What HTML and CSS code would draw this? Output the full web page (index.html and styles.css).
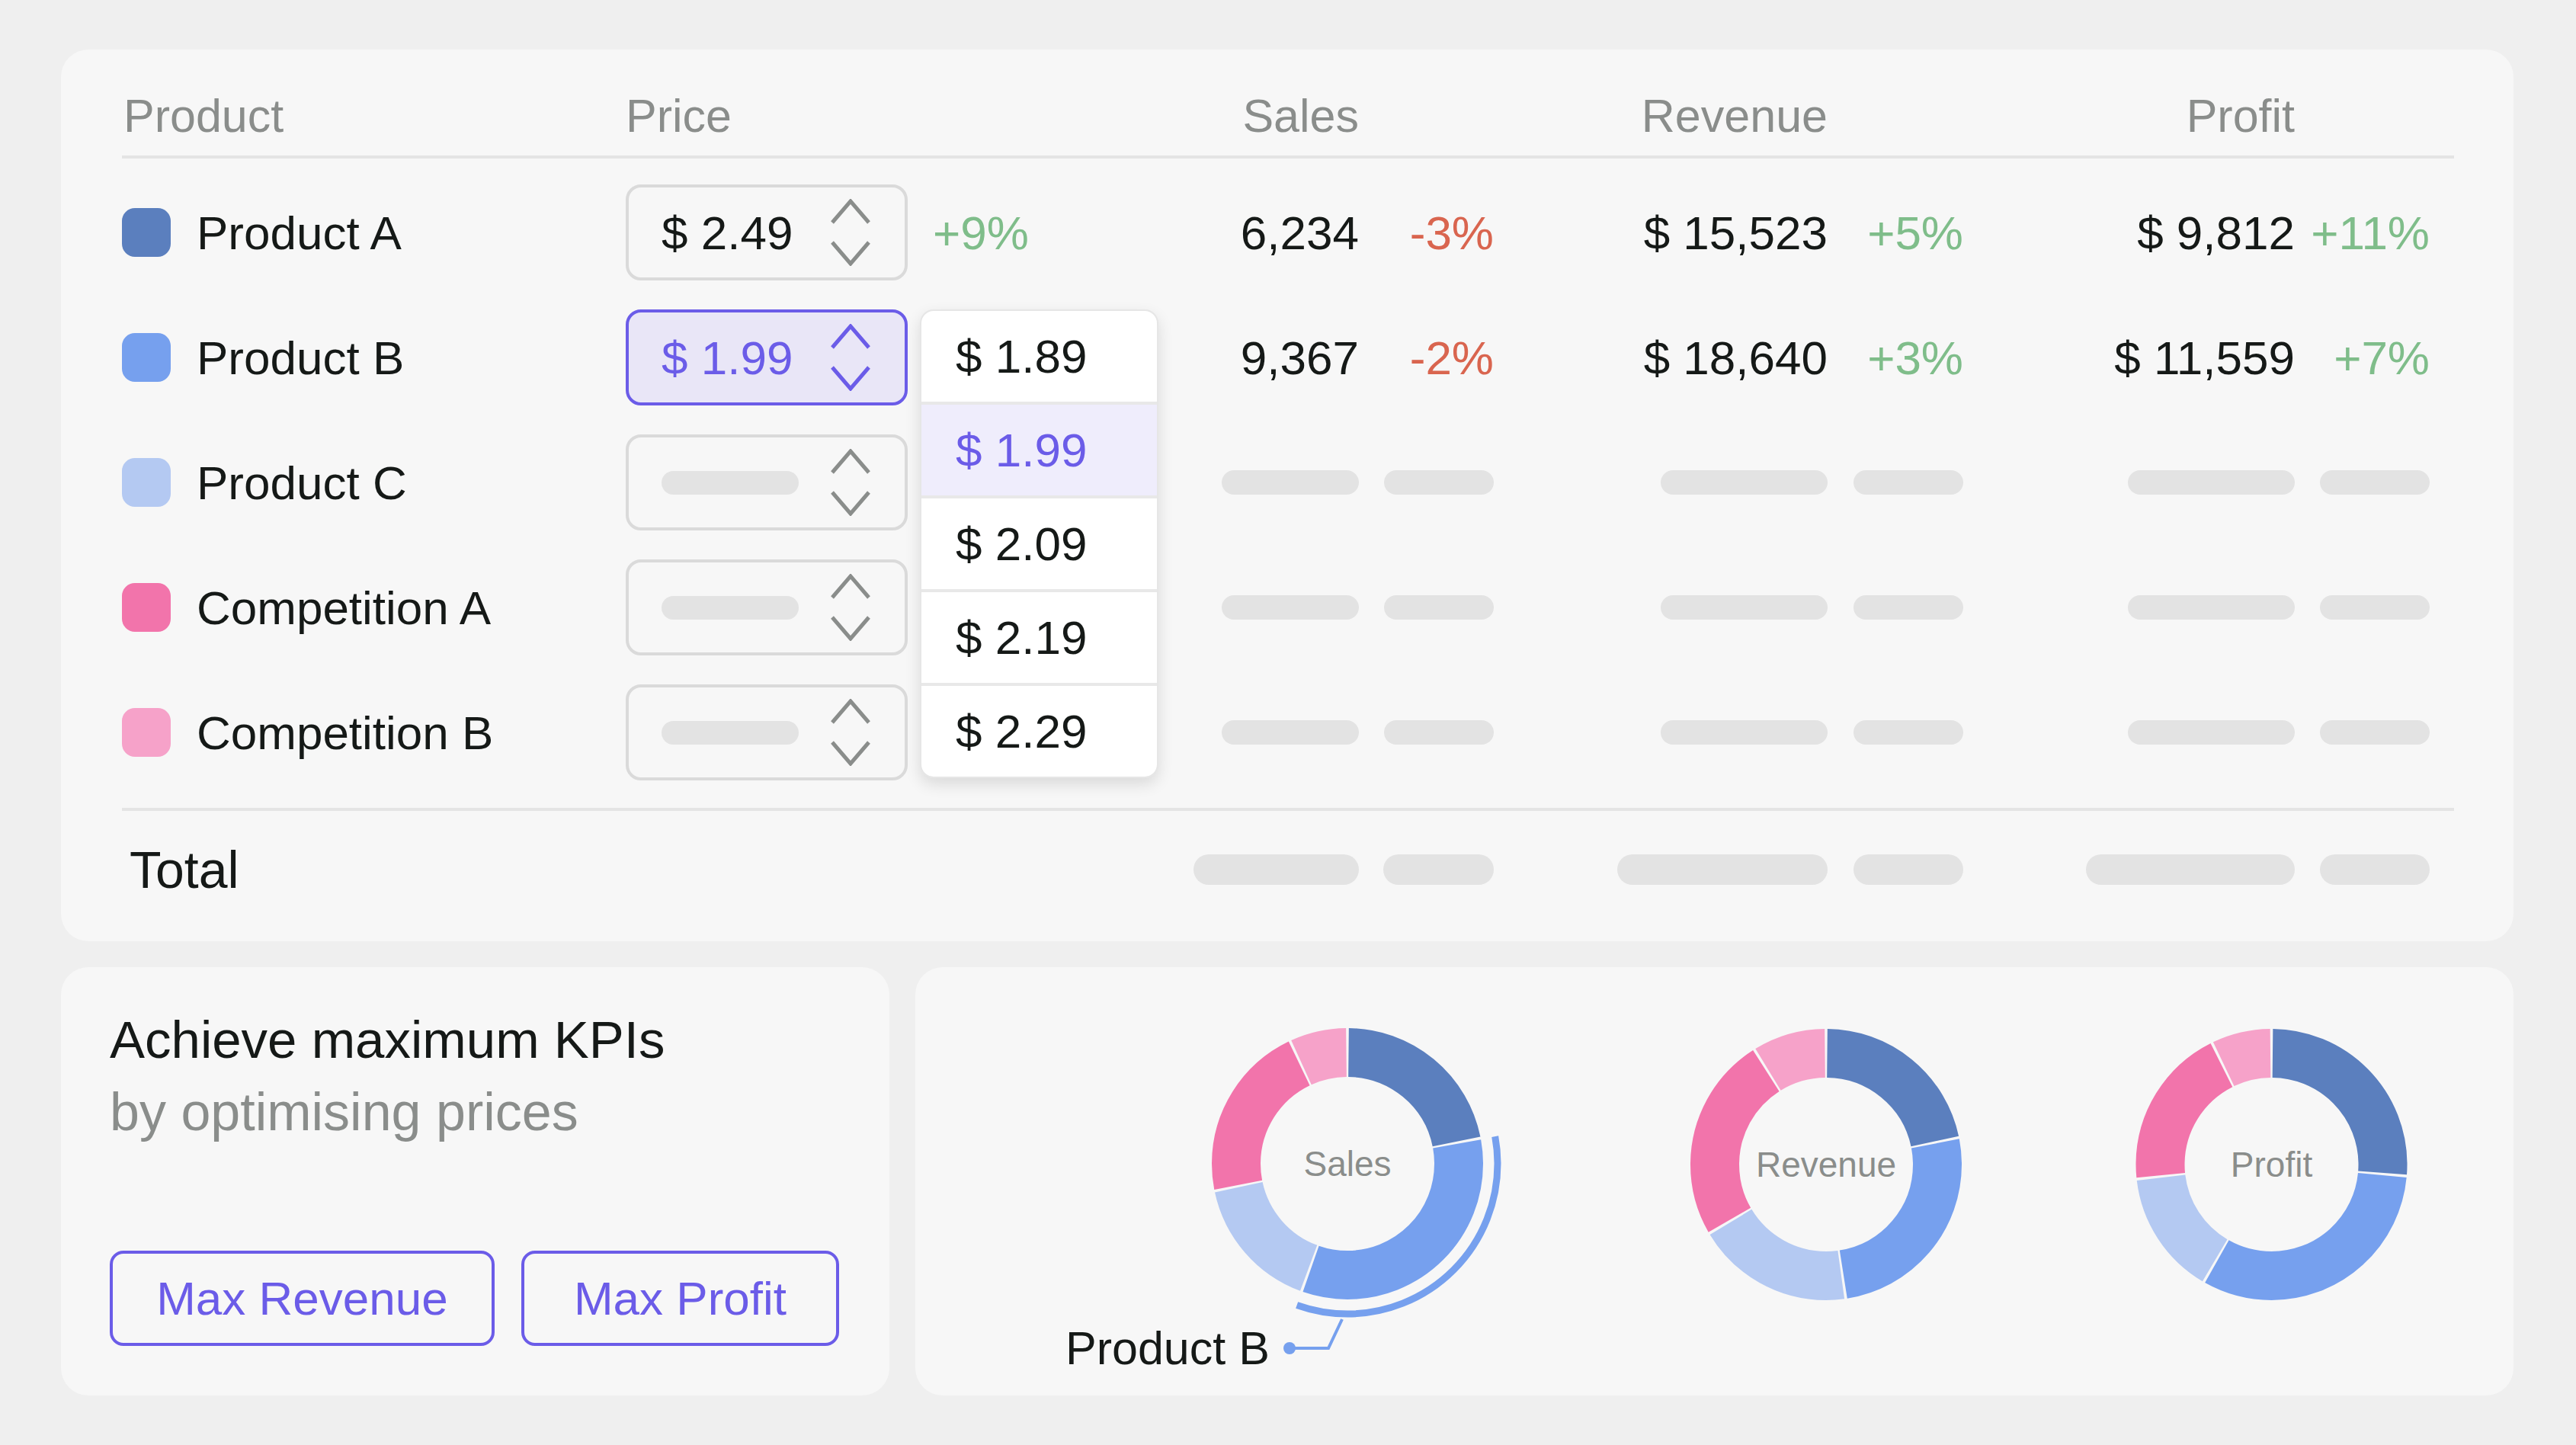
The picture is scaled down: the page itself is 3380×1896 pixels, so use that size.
FILE: index.html
```html
<!DOCTYPE html>
<html lang="en">
<head>
<meta charset="utf-8">
<title>Price optimisation</title>
<link rel="stylesheet" href="styles.css">
</head>
<body>
<div class="page">
  <section class="card table-card">
    <div class="grid thead">
      <div class="th first">Product</div>
      <div class="th">Price</div>
      <div></div>
      <div class="th r">Sales</div><div></div>
      <div class="th r">Revenue</div><div></div>
      <div class="th r">Profit</div><div></div><div></div>
    </div>

    <div class="rows">
      <div class="grid row">
        <div class="name"><span class="sw sw-a"></span>Product A</div>
        <div class="price">
          <div class="pbox"><span>$ 2.49</span>
            <svg class="chev" viewBox="0 0 54 88"><polyline points="3,31 27,3 51,31"/><polyline points="3,57 27,85 51,57"/></svg>
          </div>
        </div>
        <div class="pct-price up">+9%</div>
        <div class="num">6,234</div>
        <div class="num down">-3%</div>
        <div class="num">$ 15,523</div>
        <div class="num up">+5%</div>
        <div class="num">$ 9,812</div>
        <div class="num up">+11%</div>
        <div></div>
      </div>

      <div class="grid row">
        <div class="name"><span class="sw sw-b"></span>Product B</div>
        <div class="price">
          <div class="pbox sel"><span>$ 1.99</span>
            <svg class="chev" viewBox="0 0 54 88"><polyline points="3,31 27,3 51,31"/><polyline points="3,57 27,85 51,57"/></svg>
          </div>
          <div class="dropdown">
            <div class="opt">$ 1.89</div>
            <div class="opt sel">$ 1.99</div>
            <div class="opt">$ 2.09</div>
            <div class="opt">$ 2.19</div>
            <div class="opt">$ 2.29</div>
          </div>
        </div>
        <div></div>
        <div class="num">9,367</div>
        <div class="num down">-2%</div>
        <div class="num">$ 18,640</div>
        <div class="num up">+3%</div>
        <div class="num">$ 11,559</div>
        <div class="num up">+7%</div>
        <div></div>
      </div>

      <div class="grid row">
        <div class="name"><span class="sw sw-c"></span>Product C</div>
        <div class="price">
          <div class="pbox"><i class="sk sk-box"></i>
            <svg class="chev" viewBox="0 0 54 88"><polyline points="3,31 27,3 51,31"/><polyline points="3,57 27,85 51,57"/></svg>
          </div>
        </div>
        <div></div>
        <div class="num"><i class="sk sk-s"></i></div>
        <div class="num"><i class="sk sk-p"></i></div>
        <div class="num"><i class="sk sk-w"></i></div>
        <div class="num"><i class="sk sk-p"></i></div>
        <div class="num"><i class="sk sk-w"></i></div>
        <div class="num"><i class="sk sk-p"></i></div>
        <div></div>
      </div>

      <div class="grid row">
        <div class="name"><span class="sw sw-d"></span>Competition A</div>
        <div class="price">
          <div class="pbox"><i class="sk sk-box"></i>
            <svg class="chev" viewBox="0 0 54 88"><polyline points="3,31 27,3 51,31"/><polyline points="3,57 27,85 51,57"/></svg>
          </div>
        </div>
        <div></div>
        <div class="num"><i class="sk sk-s"></i></div>
        <div class="num"><i class="sk sk-p"></i></div>
        <div class="num"><i class="sk sk-w"></i></div>
        <div class="num"><i class="sk sk-p"></i></div>
        <div class="num"><i class="sk sk-w"></i></div>
        <div class="num"><i class="sk sk-p"></i></div>
        <div></div>
      </div>

      <div class="grid row">
        <div class="name"><span class="sw sw-e"></span>Competition B</div>
        <div class="price">
          <div class="pbox"><i class="sk sk-box"></i>
            <svg class="chev" viewBox="0 0 54 88"><polyline points="3,31 27,3 51,31"/><polyline points="3,57 27,85 51,57"/></svg>
          </div>
        </div>
        <div></div>
        <div class="num"><i class="sk sk-s"></i></div>
        <div class="num"><i class="sk sk-p"></i></div>
        <div class="num"><i class="sk sk-w"></i></div>
        <div class="num"><i class="sk sk-p"></i></div>
        <div class="num"><i class="sk sk-w"></i></div>
        <div class="num"><i class="sk sk-p"></i></div>
        <div></div>
      </div>
    </div>

    <div class="grid total">
      <div class="total-label">Total</div>
      <div></div>
      <div></div>
      <div class="num"><i class="sk sk-ts"></i></div>
      <div class="num"><i class="sk sk-tp"></i></div>
      <div class="num"><i class="sk sk-tr"></i></div>
      <div class="num"><i class="sk sk-tp2"></i></div>
      <div class="num"><i class="sk sk-tf"></i></div>
      <div class="num"><i class="sk sk-tp2"></i></div>
      <div></div>
    </div>
  </section>

  <div class="bottom">
    <section class="card kpi">
      <h2>Achieve maximum KPIs</h2>
      <p>by optimising prices</p>
      <div class="btns">
        <button class="btn btn-rev">Max Revenue</button>
        <button class="btn btn-pro">Max Profit</button>
      </div>
    </section>

    <section class="card chart">
      <svg viewBox="0 0 2097 562" xmlns="http://www.w3.org/2000/svg">
        <g fill="none" stroke-width="64">
          <g transform="rotate(-90 567 258)">
            <circle cx="567" cy="258" r="146" pathLength="360" stroke="#5b7fbe" stroke-dasharray="77.9 400" stroke-dashoffset="-0.6"/>
            <circle cx="567" cy="258" r="146" pathLength="360" stroke="#76a0ee" stroke-dasharray="119.5 400" stroke-dashoffset="-79.7"/>
            <circle cx="567" cy="258" r="146" pathLength="360" stroke="#b4c9f2" stroke-dasharray="57.4 400" stroke-dashoffset="-200.4"/>
            <circle cx="567" cy="258" r="146" pathLength="360" stroke="#f274ab" stroke-dasharray="75.3 400" stroke-dashoffset="-259"/>
            <circle cx="567" cy="258" r="146" pathLength="360" stroke="#f6a2c9" stroke-dasharray="23.9 400" stroke-dashoffset="-335.5"/>
            <circle cx="567" cy="258" r="197" pathLength="360" stroke="#76a0ee" stroke-width="9" stroke-dasharray="120.2 400" stroke-dashoffset="-79.5"/>
          </g>
          <g transform="rotate(-90 1195 259)">
            <circle cx="1195" cy="259" r="146" pathLength="360" stroke="#5b7fbe" stroke-dasharray="77.3 400" stroke-dashoffset="-0.6"/>
            <circle cx="1195" cy="259" r="146" pathLength="360" stroke="#76a0ee" stroke-dasharray="91.9 400" stroke-dashoffset="-79.1"/>
            <circle cx="1195" cy="259" r="146" pathLength="360" stroke="#b4c9f2" stroke-dasharray="66.7 400" stroke-dashoffset="-172.2"/>
            <circle cx="1195" cy="259" r="146" pathLength="360" stroke="#f274ab" stroke-dasharray="87.3 400" stroke-dashoffset="-240.1"/>
            <circle cx="1195" cy="259" r="146" pathLength="360" stroke="#f6a2c9" stroke-dasharray="30.8 400" stroke-dashoffset="-328.6"/>
          </g>
          <g transform="rotate(-90 1779.5 259)">
            <circle cx="1779.5" cy="259" r="146" pathLength="360" stroke="#5b7fbe" stroke-dasharray="93.7 400" stroke-dashoffset="-0.6"/>
            <circle cx="1779.5" cy="259" r="146" pathLength="360" stroke="#76a0ee" stroke-dasharray="113.9 400" stroke-dashoffset="-95.5"/>
            <circle cx="1779.5" cy="259" r="146" pathLength="360" stroke="#b4c9f2" stroke-dasharray="52.6 400" stroke-dashoffset="-210.6"/>
            <circle cx="1779.5" cy="259" r="146" pathLength="360" stroke="#f274ab" stroke-dasharray="68.9 400" stroke-dashoffset="-264.4"/>
            <circle cx="1779.5" cy="259" r="146" pathLength="360" stroke="#f6a2c9" stroke-dasharray="24.9 400" stroke-dashoffset="-334.5"/>
          </g>
        </g>
        <g class="donut-label" text-anchor="middle">
          <text x="567" y="274">Sales</text>
          <text x="1195" y="275">Revenue</text>
          <text x="1779.5" y="275">Profit</text>
        </g>
        <polyline points="491,500 542,500 560,462" fill="none" stroke="#76a0ee" stroke-width="4"/>
        <circle cx="491" cy="500" r="8" fill="#76a0ee"/>
        <text class="callout" x="197" y="521">Product B</text>
      </svg>
    </section>
  </div>
</div>
</body>
</html>
```

FILE: styles.css
```css
body {
  margin: 0;
  background: #efefef;
  font-family: "Liberation Sans", Arial, sans-serif;
  color: #151917;
}

.page {
  width: 3380px;
  height: 1896px;
  box-sizing: border-box;
  padding: 65px 82px 65px 80px;
  display: flex;
  flex-direction: column;
  gap: 34px;
}

.card {
  background: #f7f7f7;
  border-radius: 36px;
}

.table-card {
  height: 1170px;
  flex: none;
  box-sizing: border-box;
  padding: 0 78px 0 80px;
}

.grid {
  display: grid;
  grid-template-columns: 661px 370px 369px 223px 177px 438px 178px 435px 177px 32px;
}

.thead {
  padding-top: 51px;
  padding-bottom: 16px;
  border-bottom: 4px solid #e4e4e4;
  font-size: 61px;
  line-height: 72px;
  color: #8a8d8b;
}

.thead .first {
  padding-left: 2px;
}

.thead .r {
  text-align: right;
  white-space: nowrap;
}

.rows {
  display: flex;
  flex-direction: column;
  gap: 38px;
  padding: 34px 0 36px;
  border-bottom: 4px solid #e4e4e4;
}

.row {
  height: 126px;
  align-items: center;
  font-size: 62px;
}

.name {
  display: flex;
  align-items: center;
  gap: 34px;
  white-space: nowrap;
}

.sw {
  width: 64px;
  height: 64px;
  border-radius: 17px;
  flex: none;
}

.sw-a { background: #5b7fbe; }
.sw-b { background: #76a0ee; }
.sw-c { background: #b4c9f2; }
.sw-d { background: #f274ab; }
.sw-e { background: #f6a2c9; }

.price {
  position: relative;
  height: 126px;
}

.pbox {
  box-sizing: border-box;
  width: 370px;
  height: 126px;
  border: 4px solid #dadada;
  border-radius: 20px;
  display: flex;
  align-items: center;
  justify-content: space-between;
  padding: 0 44px 0 43px;
  white-space: nowrap;
}

.pbox.sel {
  border-color: #6b5ce8;
  background: #e9e6f7;
  color: #6b5ce8;
}

.chev {
  width: 54px;
  height: 88px;
  flex: none;
  fill: none;
  stroke: #8a8d8b;
  stroke-width: 5;
}

.pbox.sel .chev {
  stroke: #6b5ce8;
}

.pct-price {
  padding-left: 33px;
}

.num {
  display: flex;
  justify-content: flex-end;
  align-items: center;
  white-space: nowrap;
}

.up { color: #7fbd8a; }
.down { color: #d9654f; }

.sk {
  display: block;
  height: 32px;
  border-radius: 16px;
  background: #e3e3e3;
}

.sk-box { width: 180px; height: 31px; }
.sk-s { width: 180px; }
.sk-w { width: 219px; }
.sk-p { width: 144px; }

.dropdown {
  position: absolute;
  left: 386px;
  top: 0;
  width: 313px;
  box-sizing: border-box;
  background: #ffffff;
  border: 2px solid #e6e6e6;
  border-radius: 18px;
  box-shadow: 0 8px 20px rgba(0, 0, 0, 0.12);
  overflow: hidden;
  z-index: 2;
}

.opt {
  height: 119px;
  display: flex;
  align-items: center;
  padding-left: 45px;
  font-size: 62px;
  white-space: nowrap;
}

.opt + .opt {
  border-top: 4px solid #e8e8e8;
}

.opt.sel {
  background: #efedfc;
  color: #6b5ce8;
}

.total {
  height: 80px;
  margin-top: 37px;
  align-items: center;
}

.total-label {
  font-size: 68px;
  padding-left: 10px;
}

.total .sk {
  height: 40px;
  border-radius: 20px;
}

.sk-ts { width: 217px; }
.sk-tp { width: 145px; }
.sk-tr { width: 276px; }
.sk-tp2 { width: 144px; }
.sk-tf { width: 274px; }

.bottom {
  display: flex;
  gap: 34px;
  flex: 1;
}

.kpi {
  width: 1087px;
  flex: none;
  box-sizing: border-box;
  padding: 48px 64px 65px;
  display: flex;
  flex-direction: column;
}

.kpi h2 {
  margin: 0;
  font-weight: 400;
  font-size: 69px;
  line-height: 95px;
}

.kpi p {
  margin: 0;
  font-size: 70px;
  line-height: 95px;
  color: #8a8d8b;
}

.btns {
  margin-top: auto;
  display: flex;
  gap: 35px;
}

.btn {
  height: 125px;
  box-sizing: border-box;
  border: 4px solid #6b5ce8;
  border-radius: 18px;
  background: transparent;
  color: #6b5ce8;
  font-family: "Liberation Sans", Arial, sans-serif;
  font-size: 62px;
  display: flex;
  align-items: center;
  justify-content: center;
  padding: 0;
}

.btn-rev { width: 505px; }
.btn-pro { width: 417px; }

.chart {
  flex: 1;
  overflow: hidden;
}

.chart svg {
  display: block;
  width: 2097px;
  height: 562px;
}

.donut-label {
  font-family: "Liberation Sans", Arial, sans-serif;
  font-size: 46px;
  fill: #8a8d8b;
}

.callout {
  font-family: "Liberation Sans", Arial, sans-serif;
  font-size: 61px;
  fill: #151917;
}
```
